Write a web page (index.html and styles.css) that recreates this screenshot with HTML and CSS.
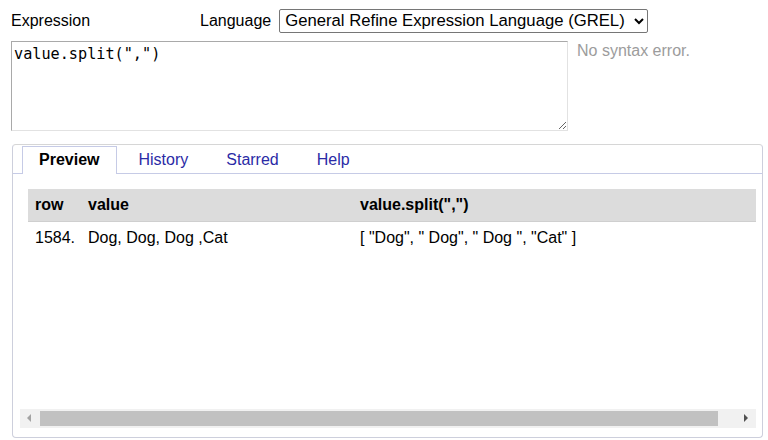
FILE: index.html
```html
<!DOCTYPE html>
<html>
<head>
<meta charset="utf-8">
<link rel="stylesheet" href="styles.css">
</head>
<body>
<div class="page">
  <div class="top-row">
    <label class="expr-label">Expression</label>
    <label class="lang-label">Language</label>
    <select class="lang-select">
      <option>General Refine Expression Language (GREL)</option>
    </select>
  </div>
  <div class="editor-row">
    <textarea class="expr-input" spellcheck="false">value.split(",")</textarea>
    <div class="status">No syntax error.</div>
  </div>
  <div class="panel">
    <div class="tab-bar">
      <div class="tab active">Preview</div>
      <div class="tab">History</div>
      <div class="tab">Starred</div>
      <div class="tab">Help</div>
    </div>
    <div class="panel-body">
      <div class="table-wrap">
        <table class="preview">
          <thead>
            <tr><th class="c-row">row</th><th class="c-val">value</th><th class="c-res">value.split(",")</th></tr>
          </thead>
          <tbody>
            <tr><td class="c-row">1584.</td><td class="c-val">Dog, Dog, Dog ,Cat</td><td class="c-res">[ "Dog", " Dog", " Dog ", "Cat" ]</td></tr>
          </tbody>
        </table>
      </div>
      <div class="hscroll">
        <div class="arrow arrow-left"></div>
        <div class="track"><div class="thumb"></div></div>
        <div class="arrow arrow-right"></div>
      </div>
    </div>
  </div>
</div>
</body>
</html>
```

FILE: styles.css
```css
html, body {
  margin: 0;
  padding: 0;
  background: #ffffff;
}
body {
  font-family: "Liberation Sans", Arial, sans-serif;
  font-size: 16px;
  color: #000;
}
.page {
  padding: 9px 0 0 11px;
}
.top-row {
  display: flex;
  align-items: center;
  height: 23px;
}
.expr-label {
  width: 189px;
}
.lang-label {
  margin-right: 8px;
}
.lang-select {
  width: 369px;
  height: 24px;
  font-family: "Liberation Sans", Arial, sans-serif;
  font-size: 16.7px;
  color: #000;
  background: #fff;
  border: 1px solid #767676;
  border-radius: 2px;
  padding: 0 1px;
}
.editor-row {
  display: flex;
  align-items: flex-start;
  margin-top: 9px;
}
.expr-input {
  width: 557px;
  height: 90px;
  box-sizing: border-box;
  margin: 0;
  padding: 3px 2px 2px;
  font-family: "DejaVu Sans Mono", "Liberation Mono", monospace;
  font-size: 15.2px;
  color: #000;
  border: 1px solid #a9a9a9;
  border-right-color: #e2e2e2;
  border-bottom-color: #e2e2e2;
  resize: both;
  outline: none;
}
.status {
  margin-left: 9px;
  padding-top: 1px;
  color: #9c9c9c;
  line-height: 18px;
}
.panel {
  margin-top: 13px;
  margin-left: 1px;
  width: 751px;
  box-sizing: border-box;
  height: 294px;
  border: 1px solid #cdcfdc;
  border-top-color: #d6d6d6;
  border-radius: 4px;
  display: flex;
  flex-direction: column;
}
.tab-bar {
  display: flex;
  align-items: flex-end;
  height: 28px;
  padding-left: 9px;
  border-bottom: 1px solid #c6cbe6;
}
.tab {
  box-sizing: border-box;
  height: 28px;
  line-height: 25px;
  padding: 0 16px 0 16px;
  margin-right: 4px;
  margin-bottom: -1px;
  border: 1px solid transparent;
  border-bottom: none;
  color: #2b2ba6;
}
.tab.active {
  color: #000;
  font-weight: bold;
  border-color: #c6cbe6;
  background: #fff;
  padding-right: 17px;
}
.panel-body {
  flex: 1;
  padding: 15px 6px 0 7px;
  display: flex;
  flex-direction: column;
}
.table-wrap {
  height: 220px;
  overflow: hidden;
  padding-left: 8px;
}
.preview {
  border-collapse: collapse;
  width: 800px;
  table-layout: fixed;
}
.preview th {
  background: #dcdcdc;
  height: 32px;
  text-align: left;
  padding: 0 0 0 7px;
  border-bottom: 1px solid #cfcfcf;
  box-sizing: border-box;
}
.preview td {
  height: 33px;
  padding: 0 0 0 7px;
  text-align: left;
}
.c-row { width: 53px; }
.c-val { width: 272px; }
.c-res { width: 475px; }
.hscroll {
  display: flex;
  height: 19px;
  background: #f1f1f1;
  align-items: stretch;
}
.arrow {
  width: 17px;
  position: relative;
}
.arrow-left::after {
  content: "";
  position: absolute;
  left: 7px;
  top: 5px;
  border-top: 4px solid transparent;
  border-bottom: 4px solid transparent;
  border-right: 4px solid #a3a3a3;
}
.arrow-right::after {
  content: "";
  position: absolute;
  left: 5px;
  top: 5px;
  border-top: 4px solid transparent;
  border-bottom: 4px solid transparent;
  border-left: 4px solid #505050;
}
.track {
  flex: 1;
  padding: 2px 3px;
}
.thumb {
  background: #c1c1c1;
  height: 15px;
  width: 678px;
}
```
